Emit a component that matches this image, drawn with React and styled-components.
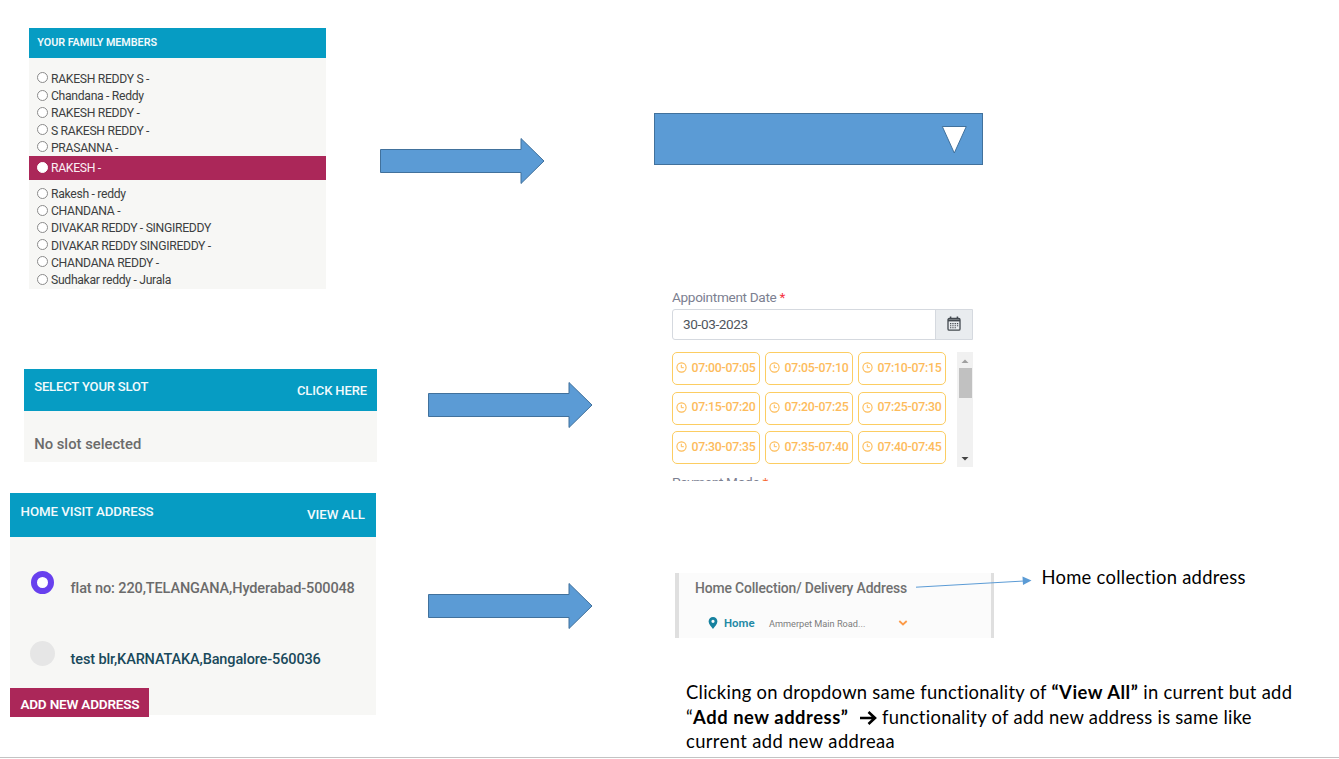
import React from "react";
import styled, { createGlobalStyle } from "styled-components";

const GlobalStyle = createGlobalStyle`
  * { box-sizing: border-box; }
  body { margin: 0; background: #fff; font-family: Roboto, "Liberation Sans", sans-serif; overflow: hidden; }
`;

const Slide = styled.main`
  display: flex;
  width: 1339px;
  height: 758px;
  background: #fff;
  border-bottom: 1px solid #c3c3c3;
  box-shadow: 0 1px 0 #e6e6e6;
`;

const Column = styled.section`
  display: flex;
  flex-direction: column;
  flex: none;
  width: ${(p) => p.$width}px;
  padding-top: ${(p) => p.$top}px;
`;

const Text = styled.span`
  white-space: nowrap;
  font-size: ${(p) => p.$size}px;
  font-weight: ${(p) => p.$weight || 400};
  letter-spacing: ${(p) => p.$tracking || 0}px;
  color: ${(p) => p.$color || "inherit"};
`;

const Card = styled.article`
  display: flex;
  flex-direction: column;
  flex: none;
  background: #f7f7f5;
`;

const FamilyCard = styled(Card)`
  width: 297px;
  height: 261px;
  margin-left: 29px;
`;

const SlotCard = styled(Card)`
  width: 352.6px;
  height: 93px;
  margin: 80px 0 0 24.4px;
`;

const AddressCard = styled(Card)`
  width: 365.6px;
  height: 222px;
  margin: 31px 0 0 10.4px;
`;

const CardHeader = styled.header`
  display: flex;
  flex: none;
  justify-content: space-between;
  height: ${(p) => p.$height}px;
  padding: ${(p) => p.$top}px ${(p) => p.$right || 10}px 0 ${(p) => p.$left}px;
  background: #069cc3;
  color: #f2fafc;
  line-height: 16px;
`;

const HeaderLink = styled.a`
  padding-top: ${(p) => p.$drop || 3}px;
`;

const MemberList = styled.ul`
  display: flex;
  flex-direction: column;
  margin: 0;
  padding: 12px 0 0;
  list-style: none;
`;

const Member = styled.li`
  display: flex;
  align-items: center;
  gap: 2.8px;
  height: ${(p) => (p.$active ? 23.5 : 17.2)}px;
  margin-bottom: ${(p) => (p.$active ? 5.7 : 0)}px;
  padding-left: 8.2px;
  color: ${(p) => (p.$active ? "#fbeef4" : "#3d3f41")};
  background: ${(p) => (p.$active ? "#ab2759" : "transparent")};
`;

const Radio = styled.span`
  width: 11px;
  height: 11px;
  margin-bottom: 2px;
  border: 1px solid ${(p) => (p.$active ? "#fff" : "#8b8b8b")};
  border-radius: 50%;
  background: #fff;
`;

const SlotBody = styled.div`
  padding: 24px 0 0 9.8px;
  line-height: 18px;
`;

const AddressRow = styled.div`
  display: flex;
  align-items: center;
  height: 28px;
  margin-top: ${(p) => p.$gap}px;
  padding-left: 19.8px;
`;

const AddressRadio = styled.span`
  flex: none;
  width: ${(p) => (p.$active ? 23 : 25)}px;
  height: ${(p) => (p.$active ? 23 : 25)}px;
  margin: 0 ${(p) => (p.$active ? 16.4 : 15.4)}px 0 ${(p) => (p.$active ? 1 : 0)}px;
  border: ${(p) => (p.$active ? "6.5px solid #6840ee" : "0")};
  border-radius: 50%;
  background: ${(p) => (p.$active ? "#fff" : "#e6e6e6")};
`;

const AddressText = styled.div`
  padding-top: 13px;
  line-height: 18px;
`;

const AddButton = styled.button`
  flex: none;
  width: 138.6px;
  height: 29.4px;
  margin-top: 21px;
  padding: 3px 0 0 10px;
  border: 0;
  background: #ab2759;
  color: #fff;
  font-family: inherit;
  text-align: left;
`;

const BlockArrow = styled.svg`
  flex: none;
  display: block;
  width: 166px;
  height: 48px;
  margin: ${(p) => p.$top}px 0 0 ${(p) => p.$left}px;
`;

const Dropdown = styled.div`
  display: flex;
  justify-content: flex-end;
  flex: none;
  width: 329px;
  height: 52px;
  padding: 12px 15px 0 0;
  border: 1px solid #41719c;
  background: #5b9bd5;
`;

const Appointment = styled.form`
  flex: none;
  display: flex;
  flex-direction: column;
  width: 301px;
  height: 193px;
  margin: 123px 0 0 18px;
  overflow: hidden;
`;

const FieldLabel = styled.label`
  flex: none;
  height: 21px;
  margin-top: ${(p) => p.$gap || 0}px;
  line-height: 18px;
  color: #7c8091;
  white-space: nowrap;
`;

const Required = styled.span`
  color: ${(p) => p.$color || "#f5333f"};
`;

const DateField = styled.div`
  display: flex;
  flex: none;
  height: 31px;
  border: 1px solid #d5d9df;
  border-radius: 3px 0 0 3px;
  line-height: 28px;
  color: #50565d;
`;

const DateValue = styled.div`
  flex: 1;
  padding-left: 10px;
`;

const DateAddon = styled.div`
  display: flex;
  align-items: center;
  justify-content: center;
  width: 37px;
  padding-bottom: 2px;
  border-left: 1px solid #d5d9df;
  background: #e9ecef;
`;

const SlotArea = styled.div`
  display: flex;
  flex: none;
  justify-content: space-between;
  height: 115px;
  margin-top: 12px;
`;

const SlotGrid = styled.div`
  display: grid;
  grid-template-columns: repeat(3, 88px);
  grid-auto-rows: 33px;
  gap: 6.6px 5px;
`;

const Slot = styled.div`
  display: flex;
  align-items: center;
  justify-content: center;
  gap: 4px;
  padding-bottom: 2px;
  border: 1.5px solid #fccd62;
  border-radius: 5px;
  color: #fdbb5b;
`;

const Scrollbar = styled.div`
  display: flex;
  flex-direction: column;
  align-items: center;
  width: 16px;
  background: #f1f1f1;
`;

const Thumb = styled.div`
  width: 13px;
  height: 30px;
  margin-bottom: auto;
  background: #c1c1c1;
`;

const PreviewRow = styled.div`
  display: flex;
  flex: none;
  margin: 92px 0 0 21px;
`;

const Preview = styled.div`
  position: relative;
  width: 319px;
  height: 65px;
  padding: 6px 0 0 16px;
  border: solid #dfdfdf;
  border-width: 0 3px 0 4px;
  background: #fbfbfb;
`;

const PreviewTitle = styled.div`
  line-height: 18px;
`;

const PreviewLine = styled.div`
  display: flex;
  align-items: center;
  height: 18px;
  margin-top: 17px;
  padding-left: 13px;
`;

const PlaceName = styled(Text)`
  margin-left: 6px;
`;

const PlaceDetail = styled(Text)`
  width: 97px;
  margin: 1px 32px 0 14.4px;
`;

const Connector = styled.svg`
  position: absolute;
  left: 237px;
  top: 0;
  width: 120px;
  height: 20px;
  overflow: visible;
`;

const Callout = styled.div`
  margin: -8.5px 0 0 47.5px;
  font-family: Lato, "Liberation Sans", sans-serif;
  line-height: 24px;
  color: #000;
`;

const Note = styled.p`
  margin: 42px 0 0 32px;
  font-family: Lato, "Liberation Sans", sans-serif;
  line-height: 24.5px;
  color: #000;
`;

const NoteLine = styled(Text)`
  display: block;
`;

const Strong = styled.b`
  letter-spacing: 0.55px;
`;

const NoteArrow = styled.svg`
  width: 18px;
  height: 14px;
  margin: 0 0 0 5.5px;
  vertical-align: -1px;
`;

const members = [
  "RAKESH REDDY S -", "Chandana - Reddy", "RAKESH REDDY -", "S RAKESH REDDY -", "PRASANNA -",
  "RAKESH -",
  "Rakesh - reddy", "CHANDANA -", "DIVAKAR REDDY - SINGIREDDY", "DIVAKAR REDDY SINGIREDDY -",
  "CHANDANA REDDY -", "Sudhakar reddy - Jurala",
];

const slots = [
  "07:00-07:05", "07:05-07:10", "07:10-07:15",
  "07:15-07:20", "07:20-07:25", "07:25-07:30",
  "07:30-07:35", "07:35-07:40", "07:40-07:45",
];

const RightArrow = ({ top, left }) => (
  <BlockArrow $top={top} $left={left} viewBox="0 0 166 48">
    <path d="M.5 12.5H141V1.5L164 24 141 46.5V35.5H.5Z" fill="#5b9bd5" stroke="#41719c" />
  </BlockArrow>
);

const Clock = () => (
  <svg width="11" height="11" viewBox="0 0 11 11" fill="none" stroke="#fdbb55">
    <circle cx="5.5" cy="5.5" r="4.6" strokeWidth="1.1" />
    <path d="M5.3 2.8V5.7H7.8" strokeWidth="1" />
  </svg>
);

const Calendar = () => (
  <svg width="14" height="15" viewBox="0 0 14 15" fill="none" stroke="#43494f">
    <rect x="1" y="2.5" width="12" height="11.6" rx="1.2" strokeWidth="1.3" />
    <path d="M1 4.4H13" strokeWidth="2" />
    <path d="M3.6 .5V3M10.4 .5V3" strokeWidth="1.5" />
    <path d="M3 7.6H11.2M3 9.7H11.2M3 11.8H9" strokeWidth="1.1" strokeDasharray="1.3 1" />
  </svg>
);

export default function App() {
  return (
    <>
      <GlobalStyle />
      <Slide>
        <Column $width={380} $top={28}>
          <FamilyCard>
            <CardHeader $height={30.4} $top={7} $left={8.3}>
              <Text $size={10.8} $weight={600} $tracking={-0.04}>YOUR FAMILY MEMBERS</Text>
            </CardHeader>
            <MemberList>
              {members.map((name) => {
                const active = name === "RAKESH -";
                return (
                  <Member key={name} $active={active}>
                    <Radio $active={active} />
                    <Text $size={12.2} $tracking={-0.31}>{name}</Text>
                  </Member>
                );
              })}
            </MemberList>
          </FamilyCard>

          <SlotCard>
            <CardHeader $height={42} $top={10} $left={9.8}>
              <Text $size={13} $weight={500} $tracking={-0.14}>SELECT YOUR SLOT</Text>
              <HeaderLink $drop={2.5}><Text $size={13} $weight={500} $tracking={-0.12}>CLICK HERE</Text></HeaderLink>
            </CardHeader>
            <SlotBody>
              <Text $size={14.8} $weight={500} $color="#6b6b6b">No slot selected</Text>
            </SlotBody>
          </SlotCard>

          <AddressCard>
            <CardHeader $height={44} $top={11} $left={10.2} $right={11}>
              <Text $size={13.3} $weight={500} $tracking={-0.07}>HOME VISIT ADDRESS</Text>
              <HeaderLink $drop={2}><Text $size={13.3} $weight={500}>VIEW ALL</Text></HeaderLink>
            </CardHeader>
            <AddressRow $gap={31}>
              <AddressRadio $active />
              <AddressText>
                <Text $size={14.5} $weight={500} $tracking={-0.12} $color="#6b6b6b">flat no: 220,TELANGANA,Hyderabad-500048</Text>
              </AddressText>
            </AddressRow>
            <AddressRow $gap={43}>
              <AddressRadio />
              <AddressText>
                <Text $size={14.5} $weight={500} $tracking={-0.13} $color="#19495b">test blr,KARNATAKA,Bangalore-560036</Text>
              </AddressText>
            </AddressRow>
            <AddButton type="button"><Text $size={13.6} $weight={600} $tracking={-0.23}>ADD NEW ADDRESS</Text></AddButton>
          </AddressCard>
        </Column>

        <Column $width={274} $top={137}>
          <RightArrow top={0} left={0} />
          <RightArrow top={196} left={48} />
          <RightArrow top={153} left={48} />
        </Column>

        <Column $width={685} $top={113}>
          <Dropdown>
            <svg width="26" height="28" viewBox="0 0 26 28">
              <path d="M1.3 .5H25.3L13.3 27Z" fill="#fff" stroke="#41719c" />
            </svg>
          </Dropdown>

          <Appointment>
            <FieldLabel><Text $size={13.6} $tracking={-0.32}>Appointment Date <Required>*</Required></Text></FieldLabel>
            <DateField>
              <DateValue><Text $size={13.6} $tracking={-0.38}>30-03-2023</Text></DateValue>
              <DateAddon><Calendar /></DateAddon>
            </DateField>
            <SlotArea>
              <SlotGrid>
                {slots.map((time) => (
                  <Slot key={time}>
                    <Clock />
                    <Text $size={12.3} $weight={500} $tracking={-0.22}>{time}</Text>
                  </Slot>
                ))}
              </SlotGrid>
              <Scrollbar>
                <svg width="16" height="16" viewBox="0 0 16 16"><path d="M4.5 11 8 7.5 11.5 11Z" fill="#a0a0a0" /></svg>
                <Thumb />
                <svg width="16" height="16" viewBox="0 0 16 16"><path d="M4.5 6 8 9.5 11.5 6Z" fill="#444" /></svg>
              </Scrollbar>
            </SlotArea>
            <FieldLabel $gap={6.4}>
              <Text $size={13.6} $tracking={-0.32}>Payment Mode <Required $color="#f76a35">*</Required></Text>
            </FieldLabel>
          </Appointment>

          <PreviewRow>
            <Preview>
              <PreviewTitle>
                <Text $size={13.9} $weight={500} $tracking={-0.14} $color="#707070">Home Collection/ Delivery Address</Text>
              </PreviewTitle>
              <PreviewLine>
                <svg width="10" height="12" viewBox="0 0 10 12">
                  <path fillRule="evenodd" d="M5 0a4.4 4.4 0 0 0-4.4 4.4C.6 7.3 3.5 9.5 5 12 6.5 9.5 9.4 7.3 9.4 4.4A4.4 4.4 0 0 0 5 0Zm0 2.7a1.6 1.6 0 1 1 0 3.2 1.6 1.6 0 0 1 0-3.2Z" fill="#16819f" />
                </svg>
                <PlaceName $size={11.4} $weight={600} $color="#2389a5">Home</PlaceName>
                <PlaceDetail $size={9.2} $color="#7d7d7d">Ammerpet Main Road...</PlaceDetail>
                <svg width="10" height="8" viewBox="0 0 10 8">
                  <path d="M1.3 2 5 5.5 8.7 2" fill="none" stroke="#fc9a48" strokeWidth="1.8" />
                </svg>
              </PreviewLine>
              <Connector viewBox="0 0 120 20">
                <path d="M0 14.2 108 8" stroke="#5b9bd5" />
                <path d="M106.5 3.5 115.5 7.5 107 12Z" fill="#5b9bd5" />
              </Connector>
            </Preview>
            <Callout><Text $size={18.4} $tracking={0.27}>Home collection address</Text></Callout>
          </PreviewRow>

          <Note>
            <NoteLine $size={18.4} $tracking={0.26}>Clicking on dropdown same functionality of <Strong>“View All”</Strong> in current but add</NoteLine>
            <NoteLine $size={18.4} $tracking={0.28}>
              “<Strong>Add new address”</Strong>{" "}
              <NoteArrow viewBox="0 0 18 14"><path d="M1 7H16M9.5 1 16 7 9.5 13" fill="none" stroke="#000" strokeWidth="2.6" /></NoteArrow>
              {" "}functionality of add new address is same like
            </NoteLine>
            <NoteLine $size={18.4} $tracking={0.38}>current add new addreaa</NoteLine>
          </Note>
        </Column>
      </Slide>
    </>
  );
}
